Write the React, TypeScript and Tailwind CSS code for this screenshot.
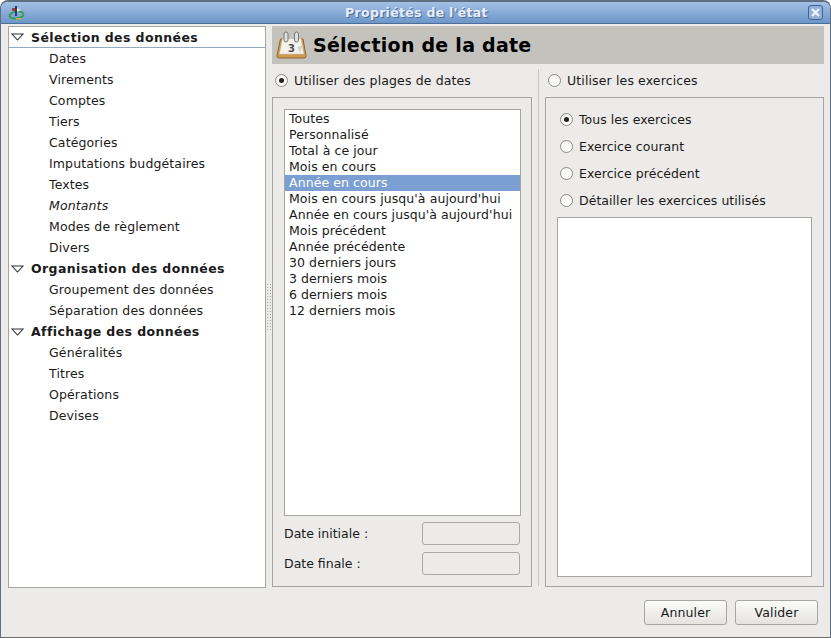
import type { ReactNode } from "react"

const TREE = [
  {
    title: "Sélection des données",
    items: ["Dates", "Virements", "Comptes", "Tiers", "Catégories", "Imputations budgétaires", "Textes", "Montants", "Modes de règlement", "Divers"],
  },
  { title: "Organisation des données", items: ["Groupement des données", "Séparation des données"] },
  { title: "Affichage des données", items: ["Généralités", "Titres", "Opérations", "Devises"] },
]

const RANGES = [
  "Toutes",
  "Personnalisé",
  "Total à ce jour",
  "Mois en cours",
  "Année en cours",
  "Mois en cours jusqu'à aujourd'hui",
  "Année en cours jusqu'à aujourd'hui",
  "Mois précédent",
  "Année précédente",
  "30 derniers jours",
  "3 derniers mois",
  "6 derniers mois",
  "12 derniers mois",
]

const YEARS = ["Tous les exercices", "Exercice courant", "Exercice précédent", "Détailler les exercices utilisés"]

function Radio({ checked, label }: { checked?: boolean; label: string }) {
  return (
    <div className="flex items-center gap-[6px] h-[17px]">
      <span className="w-[13px] h-[13px] rounded-full border border-[#8a8a86] bg-gradient-to-b from-[#f4f4f2] to-white flex items-center justify-center shrink-0">
        {checked && <span className="w-[5px] h-[5px] rounded-full bg-[#222]" />}
      </span>
      <span className="pt-[2px]">{label}</span>
    </div>
  )
}

function Frame({ className, children }: { className: string; children: ReactNode }) {
  return <div className={`border border-[#a5a5a1] ${className}`}>{children}</div>
}

function DateField({ label }: { label: string }) {
  return (
    <div className="flex items-center justify-between h-[24px]">
      <span className="pt-[2px] tracking-normal">{label}</span>
      <div className="w-[98px] h-[23px] rounded-[3px] border border-[#a9a9a5] bg-[#ecebe9]" />
    </div>
  )
}

function WindowIcon() {
  return (
    <svg width="17" height="16" viewBox="0 0 17 16">
      <ellipse cx="8.500" cy="10" rx="7" ry="3.500" fill="none" stroke="#2f9e57" strokeWidth="1.800" transform="rotate(-8 8.500 10)" />
      <path d="M7 1h2v10H7z" fill="#1f3f78" />
      <path d="M9 3l4 2-4 2z" fill="#f0e4c0" />
      <path d="M4 3h3v3H4z" fill="#b33a2c" />
      <path d="M8 13h5v1.500H8z" fill="#d0b02e" />
    </svg>
  )
}

function CalendarIcon() {
  return (
    <svg width="32" height="32" viewBox="0 0 32 32">
      <path d="M4.500 10H27l3 16.500Q30.300 29 28 29H3Q.7 29 1 26.500z" fill="#cf9b52" stroke="#8f6424" />
      <path d="M6.500 9.500h18.500l2.800 15.500H3.500z" fill="#f3f2ed" stroke="#c4c3ba" strokeWidth="0.500" />
      <rect x="8" y="3" width="4" height="10" rx="2" fill="#dfdfdb" stroke="#77776f" />
      <rect x="18.500" y="3" width="4" height="10" rx="2" fill="#dfdfdb" stroke="#77776f" />
      <text x="12" y="23" fontSize="10" fontFamily="'DejaVu Sans', sans-serif" fontWeight="700" fill="#4e4e48">3</text>
      <path d="M21.500 18l5-1.500-2.500 7z" fill="#d0d0ca" />
    </svg>
  )
}

function TreeArrow() {
  return (
    <svg width="13" height="8" viewBox="0 0 13 8" className="shrink-0">
      <path d="M1 1h11L6.500 7z" fill="#fff" stroke="#2e3436" strokeWidth="1.100" />
    </svg>
  )
}

export default function App() {
  return (
    <div className="w-[831px] h-[638px] bg-white overflow-hidden text-[12.5px] tracking-[0.13px] text-[#1a1a1a] font-['DejaVu_Sans',sans-serif]">
      <div className="w-full h-full flex flex-col rounded-t-[8px] border border-t-[2px] border-[#5f6f80] border-b-[#6a6a68] bg-[#ecebe9] overflow-hidden">
        {/* Title bar */}
        <div className="h-[22px] shrink-0 flex items-center justify-between pl-[7px] pr-[7px] bg-gradient-to-b from-[#a4c1e6] to-[#6d96c8] border-b border-[#4c6e9a]">
          <WindowIcon />
          <span className="pt-[2px] font-bold tracking-[0.3px] text-[#e8eef8] [text-shadow:1px_1px_0_#4a6a98]">Propriétés de l'état</span>
          <span className="w-[15px] h-[15px] rounded-[3px] border border-[#40628f] bg-[#8fb0da] flex items-center justify-center">
            <svg width="11" height="11" viewBox="0 0 11 11">
              <path d="M2 2l7 7M9 2l-7 7" stroke="#f2f5fa" strokeWidth="2.200" />
            </svg>
          </span>
        </div>

        {/* Body */}
        <div className="flex-1 min-h-0 flex pt-[2px] pl-[7px] pr-[6px]">
          {/* Tree */}
          <div className="w-[258px] h-[562px] shrink-0 bg-white border border-[#a5a5a1]">
            {TREE.map((group, i) => (
              <div key={group.title}>
                <div
                  className={`flex items-center h-[21px] pl-[2px] gap-[7px] font-bold tracking-[0.4px] ${
                    i === 0 ? "border-b border-[#94a9c4]" : ""
                  }`}
                >
                  <TreeArrow />
                  <span className="pt-[2px]">{group.title}</span>
                </div>
                {group.items.map((item) => (
                  <div key={item} className={`h-[21px] leading-[21px] pl-[40px] ${item === "Montants" ? "italic" : ""}`}>
                    {item}
                  </div>
                ))}
              </div>
            ))}
          </div>

          {/* Paned handle */}
          <div className="w-[6px] shrink-0 flex items-start pt-[257px]">
            <div className="w-[6px] h-[48px] bg-[radial-gradient(circle,#a8a8a4_0.8px,transparent_1px)] bg-[length:3px_3px]" />
          </div>

          {/* Page */}
          <div className="flex-1 min-w-0 flex flex-col">
            <div className="h-[38px] shrink-0 bg-[#c3c2bc] flex items-center gap-[5px] pl-[4px]">
              <CalendarIcon />
              <span className="text-[19px] font-bold tracking-[0.25px] text-black">Sélection de la date</span>
            </div>

            <div className="flex flex-1 min-h-0 pt-[6px]">
              {/* Date ranges */}
              <div className="w-[260px] shrink-0 flex flex-col">
                <div className="h-[20px] flex items-center pl-[3px] shrink-0">
                  <Radio checked label="Utiliser des plages de dates" />
                </div>
                <Frame className="mt-[7px] h-[490px] pl-[11px] pr-[10px] pt-[11px] flex flex-col">
                  <div className="h-[407px] bg-white border border-[#a5a5a1] pt-[1px] shrink-0 tracking-[0.08px]">
                    {RANGES.map((r) => (
                      <div
                        key={r}
                        className={`h-[16px] leading-[16px] pl-[4px] whitespace-nowrap ${
                          r === "Année en cours" ? "bg-[#7c9fd3] text-white" : ""
                        }`}
                      >
                        {r}
                      </div>
                    ))}
                  </div>
                  <div className="mt-[5px] flex flex-col gap-[6px] pr-[1px]">
                    <DateField label="Date initiale :" />
                    <DateField label="Date finale :" />
                  </div>
                </Frame>
              </div>

              {/* Separator */}
              <div className="w-[13px] shrink-0 flex justify-center">
                <div className="w-px h-[517px] bg-[#c6c6c2] -mt-[1px]" />
              </div>

              {/* Years */}
              <div className="flex-1 min-w-0 flex flex-col">
                <div className="h-[20px] flex items-center pl-[3px] shrink-0">
                  <Radio label="Utiliser les exercices" />
                </div>
                <Frame className="mt-[7px] h-[490px] px-[11px] pt-[13px] flex flex-col">
                  <div className="flex flex-col gap-[10px] pl-[3px] tracking-[0.05px]">
                    {YEARS.map((y, i) => (
                      <Radio key={y} checked={i === 0} label={y} />
                    ))}
                  </div>
                  <div className="mt-[8px] h-[360px] bg-white border border-[#a5a5a1]" />
                </Frame>
              </div>
            </div>
          </div>
        </div>

        {/* Buttons */}
        <div className="shrink-0 h-[50px] flex justify-end gap-[8px] pr-[12px] pt-[13px]">
          <button className="w-[83px] h-[25px] pt-[1px] rounded-[3px] border border-[#a5a5a1] bg-gradient-to-b from-[#fbfbfa] to-[#e4e3e0]">Annuler</button>
          <button className="w-[83px] h-[25px] pt-[1px] rounded-[3px] border border-[#a5a5a1] bg-gradient-to-b from-[#fbfbfa] to-[#e4e3e0]">Valider</button>
        </div>
      </div>
    </div>
  )
}
